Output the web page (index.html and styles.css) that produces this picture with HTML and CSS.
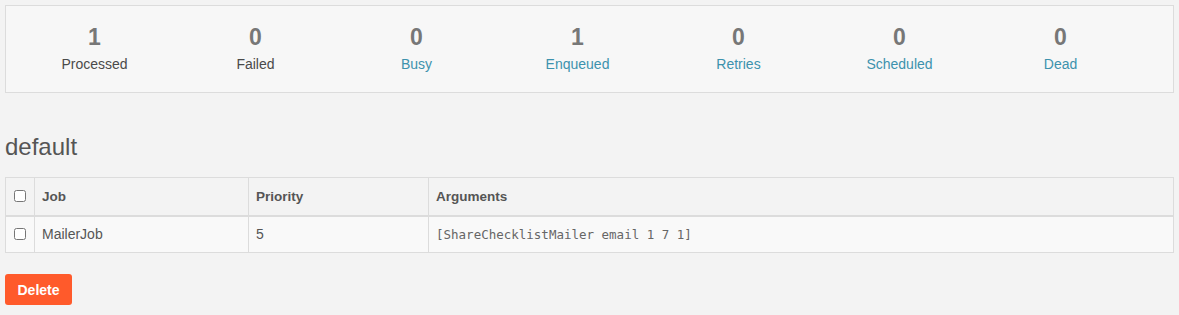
FILE: index.html
```html
<!DOCTYPE html>
<html lang="en">

<head>
  <meta charset="UTF-8">
  <title>Sidekiq - default</title>
  <link rel="stylesheet" href="styles.css">
</head>

<body>

<div class="page">
  <ul class="summary">
    <li class="stat">
      <span class="count">1</span>
      <span class="desc">Processed</span>
    </li>
    <li class="stat">
      <span class="count">0</span>
      <span class="desc">Failed</span>
    </li>
    <li class="stat">
      <span class="count">0</span>
      <a class="desc link" href="#">Busy</a>
    </li>
    <li class="stat">
      <span class="count">1</span>
      <a class="desc link" href="#">Enqueued</a>
    </li>
    <li class="stat">
      <span class="count">0</span>
      <a class="desc link" href="#">Retries</a>
    </li>
    <li class="stat">
      <span class="count">0</span>
      <a class="desc link" href="#">Scheduled</a>
    </li>
    <li class="stat">
      <span class="count">0</span>
      <a class="desc link" href="#">Dead</a>
    </li>
  </ul>

  <h3 class="queue-name">default</h3>

  <table class="queue-table">
    <thead>
      <tr>
        <th class="col-check"><input type="checkbox"></th>
        <th class="col-job">Job</th>
        <th class="col-priority">Priority</th>
        <th>Arguments</th>
      </tr>
    </thead>
    <tbody>
      <tr>
        <td class="col-check"><input type="checkbox"></td>
        <td>MailerJob</td>
        <td>5</td>
        <td><code>[ShareChecklistMailer email 1 7 1]</code></td>
      </tr>
    </tbody>
  </table>

  <button class="btn-delete" type="button">Delete</button>
</div>

</body>
</html>
```

FILE: styles.css
```css
* {
  margin: 0;
  padding: 0;
  box-sizing: border-box;
}

body {
  background-color: #f3f3f3;
  font-family: 'Liberation Sans', Arial, sans-serif;
  font-size: 14px;
  color: #555;
}

.page {
  padding: 5px 5px 0 5px;
}

.summary {
  list-style: none;
  display: flex;
  height: 88px;
  padding-left: 8px;
  border: 1px solid #dcdcdc;
  background-color: #f7f7f7;
}

.stat {
  width: 161px;
  display: flex;
  flex-direction: column;
  align-items: center;
  padding-top: 18px;
}

.count {
  font-size: 23px;
  font-weight: bold;
  color: #777;
  line-height: 26px;
}

.desc {
  margin-top: 6px;
  font-size: 14px;
  color: #4a4a4a;
  line-height: 16px;
}

.link {
  color: #3d92ad;
  text-decoration: none;
}

.queue-name {
  margin-top: 41px;
  font-size: 24px;
  font-weight: normal;
  line-height: 26px;
  color: #555;
}

.queue-table {
  width: 100%;
  margin-top: 17px;
  border-collapse: collapse;
  border: 1px solid #dcdcdc;
}

.queue-table th,
.queue-table td {
  border: 1px solid #dcdcdc;
  text-align: left;
  padding: 0 7px;
  vertical-align: middle;
}

.queue-table th {
  height: 38px;
  font-size: 13.5px;
  font-weight: bold;
  color: #555;
  border-bottom: 2px solid #dcdcdc;
}

.queue-table td {
  height: 37px;
  background-color: #f9f9f9;
  color: #555;
}

.col-check {
  width: 29px;
}

.col-job {
  width: 214px;
}

.col-priority {
  width: 180px;
}

.queue-table input {
  display: block;
  width: 12px;
  height: 12px;
  margin: 0 0 0 1px;
}

code {
  font-family: 'DejaVu Sans Mono', 'Liberation Mono', monospace;
  font-size: 12.5px;
  color: #666;
}

.btn-delete {
  margin-top: 21px;
  width: 67px;
  height: 31px;
  border: none;
  border-radius: 3px;
  background-color: #ff5a2b;
  color: #fff;
  font-family: 'Liberation Sans', Arial, sans-serif;
  font-size: 14px;
  font-weight: bold;
}
```
